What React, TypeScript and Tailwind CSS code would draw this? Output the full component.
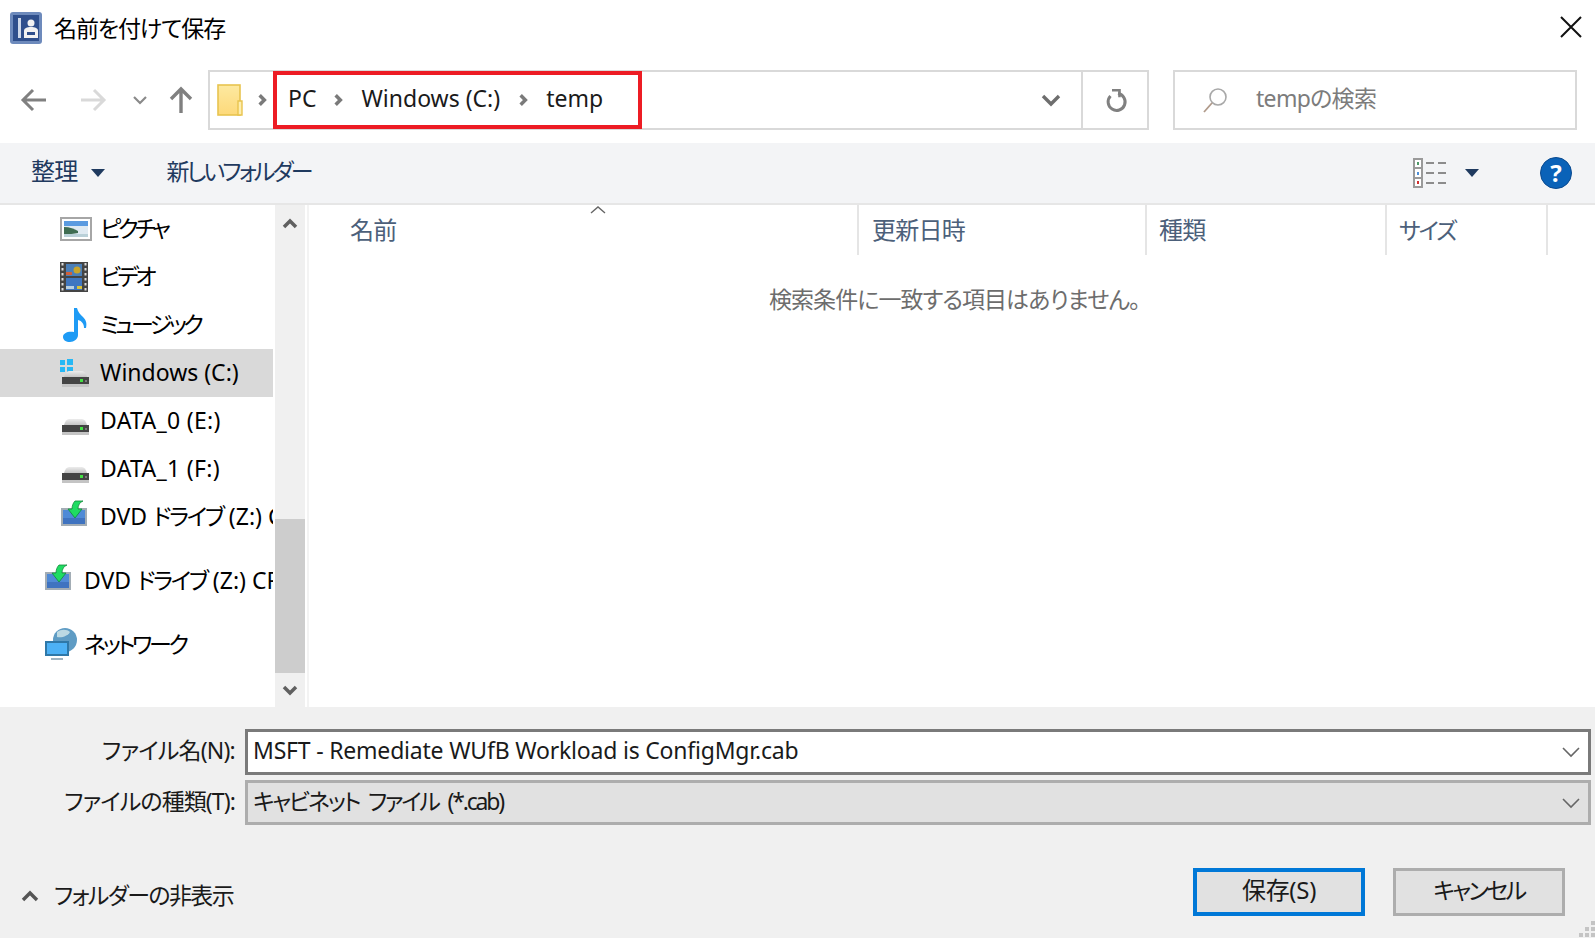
import React from "react";

const FONT = "font-['Noto_Sans','Noto_Sans_CJK_JP',sans-serif]";
const PALT = "[font-feature-settings:'palt']";
const KANA = `text-[23px] tracking-[-3.6px] ${PALT}`;
const LATIN = "text-[23px]";
const KANJI = `text-[24px] tracking-[-0.03em] ${PALT}`;

function Chevron({ className, color = "#7a7a7a", w = 3 }: { className?: string; color?: string; w?: number }) {
  return (
    <svg viewBox="0 0 10 12" className={className} fill="none">
      <path d="M3 2l4 4-4 4" stroke={color} strokeWidth={w} />
    </svg>
  );
}

function DownCaret({ className }: { className?: string }) {
  return (
    <svg viewBox="0 0 16 10" className={className}>
      <path d="M1 1h14L8 9z" fill="#1f3a5f" />
    </svg>
  );
}

function ThinDown() {
  return (
    <svg viewBox="0 0 18 12" className="w-[18px] h-[12px]" fill="none">
      <path d="M1 2l8 8 8-8" stroke="#666" strokeWidth="1.6" />
    </svg>
  );
}

function AppIcon() {
  return (
    <svg viewBox="0 0 32 32" className="w-[32px] h-[32px]">
      <rect x="0" y="0" width="32" height="32" rx="3" fill="#6d8abc" />
      <rect x="3" y="3" width="26" height="26" fill="#2f4f8c" />
      <rect x="8" y="6" width="3" height="20" fill="#cfd9ea" />
      <circle cx="21" cy="11" r="3.5" fill="#f2f2f2" />
      <path d="M14 26v-7c0-3 3-4 7-4s7 1 7 4v7z" fill="#f2f2f2" />
      <rect x="17" y="20" width="8" height="3" fill="#2f4f8c" />
    </svg>
  );
}

function FolderIcon() {
  return (
    <svg viewBox="0 0 26 32" className="w-[26px] h-[32px]">
      <defs>
        <linearGradient id="fo" x1="0" y1="0" x2="0" y2="1">
          <stop offset="0" stopColor="#fde9a0" />
          <stop offset="1" stopColor="#fdd97a" />
        </linearGradient>
      </defs>
      <rect x="1" y="1" width="22" height="30" fill="url(#fo)" stroke="#e8c44f" strokeWidth="1.6" />
      <path d="M21 17h4v14h-4z" fill="#fdeeb0" stroke="#e8c44f" strokeWidth="1.4" />
    </svg>
  );
}

function PictureIcon() {
  return (
    <svg viewBox="0 0 32 24" className="w-[32px] h-[24px]">
      <rect x="1" y="1" width="30" height="22" fill="#fff" stroke="#a6a6a6" strokeWidth="2" />
      <rect x="4" y="4" width="24" height="16" fill="#dfeaf2" />
      <rect x="4" y="4" width="24" height="5" fill="#5b9be0" />
      <path d="M4 10c6 0 10 2 14 4v2c-4 1-9 1-14 1z" fill="#3f6d52" />
      <path d="M4 17h24v3H4z" fill="#b9d0d8" />
    </svg>
  );
}

function VideoIcon() {
  return (
    <svg viewBox="0 0 28 30" className="w-[28px] h-[30px]">
      <rect x="0" y="0" width="28" height="30" fill="#444" />
      {[1, 6, 11, 16, 21, 26].map((y) => (
        <React.Fragment key={y}>
          <rect x="1.5" y={y} width="2" height="2.5" fill="#ddd" />
          <rect x="24.5" y={y} width="2" height="2.5" fill="#ddd" />
        </React.Fragment>
      ))}
      <rect x="6" y="2" width="16" height="12" fill="#4b7fb8" />
      <circle cx="17" cy="8" r="3.5" fill="#c9a52c" />
      <rect x="6" y="10" width="6" height="3" fill="#d0603a" />
      <rect x="6" y="16" width="16" height="12" fill="#3f76c0" />
      <rect x="6" y="24" width="8" height="3" fill="#b8cfe0" />
      <rect x="17" y="24" width="5" height="3" fill="#d9c23a" />
    </svg>
  );
}

function MusicIcon() {
  return (
    <svg viewBox="0 0 24 34" className="ml-[3px] w-[24px] h-[34px]">
      <path
        d="M11 0h3c1 4 3 6 6 9 3 3 4 6 3 11h-2c0-4-2-7-6-8v15c0 4-4 7-8 7-4 0-7-2-7-5 0-4 5-6 11-5z"
        fill="#1e9bf5"
      />
    </svg>
  );
}

function DriveIcon({ win }: { win?: boolean }) {
  return (
    <svg viewBox="0 0 30 30" className="w-[30px] h-[30px]">
      <defs>
        <linearGradient id="dome" x1="0" y1="0" x2="0" y2="1">
          <stop offset="0" stopColor="#ececec" />
          <stop offset="1" stopColor="#bdbdbd" />
        </linearGradient>
      </defs>
      {win && (
        <g fill="#26b8f5">
          <rect x="0" y="2" width="5" height="5" />
          <rect x="7" y="1" width="6" height="6" />
          <rect x="0" y="9" width="5" height="5" />
          <rect x="7" y="9" width="6" height="5" />
        </g>
      )}
      <path d="M4 19c1-4 3-6 5-6h13c2 0 4 2 5 6v1H4z" fill="url(#dome)" />
      <rect x="2" y="19" width="27" height="7" fill="#444" />
      <rect x="2" y="26" width="27" height="3" fill="#c4c4c4" />
      <rect x="20" y="21" width="3" height="3" fill="#43e043" />
      <rect x="25" y="22" width="2" height="2" fill="#7a7a7a" />
    </svg>
  );
}

function DvdIcon() {
  return (
    <svg viewBox="0 0 28 28" className="-mt-[6px] w-[28px] h-[28px]">
      <rect x="1" y="8" width="26" height="18" fill="#a3adb5" />
      <rect x="3" y="10" width="22" height="14" fill="#4f8ad6" />
      <rect x="3" y="18" width="22" height="6" fill="#3f73c0" />
      <path d="M15 1h8c-3 1-5 4-5 8h4l-7 9-7-9h4c0-3 1-6 3-8z" fill="#1fdc62" stroke="#0f8a3a" strokeWidth="0.8" />
    </svg>
  );
}

function NetworkIcon() {
  return (
    <svg viewBox="0 0 34 34" className="w-[34px] h-[34px]">
      <circle cx="21" cy="12" r="12" fill="#5f9cc4" />
      <path d="M13 4c4-3 10-3 13 0-2 4-8 6-13 5z" fill="#bcd9e3" />
      <rect x="1" y="13" width="24" height="15" fill="#2f78a8" />
      <rect x="3" y="15" width="20" height="11" fill="#4db1f5" />
      <rect x="7" y="30" width="12" height="2" fill="#9fb4c2" />
    </svg>
  );
}

function ViewIcon() {
  return (
    <svg viewBox="0 0 34 30" className="w-[34px] h-[30px]">
      <rect x="1" y="1" width="8" height="28" fill="#fff" stroke="#9a9a9a" strokeWidth="2" />
      <path d="M1 10h8M1 20h8" stroke="#9a9a9a" strokeWidth="2" />
      <rect x="4" y="4" width="2" height="3" fill="#4f9a6a" />
      <rect x="4" y="14" width="2" height="3" fill="#4f8fd6" />
      <rect x="4" y="23" width="2" height="3" fill="#d03030" />
      <path d="M13 5h8M25 5h8M13 15h8M25 15h8M13 25h8M25 25h8" stroke="#8c8c8c" strokeWidth="2" />
    </svg>
  );
}

function HelpIcon() {
  return (
    <div className={`w-[32px] h-[32px] rounded-full bg-[#0a62b8] border border-[#0a4a90] flex items-center justify-center text-white text-[24px] font-bold leading-none ${FONT}`}>
      ?
    </div>
  );
}

type Row = { label: React.ReactNode; cls: string; icon: React.ReactNode; outer?: boolean; selected?: boolean };

const kanaSpan = (s: string) => <span className="tracking-[-2.2px]">{s}</span>;
const DATA = "text-[23px] tracking-[0.3px]";

const rows: Row[] = [
  { label: "ピクチャ", cls: KANA, icon: <PictureIcon /> },
  { label: "ビデオ", cls: KANA, icon: <VideoIcon /> },
  { label: "ミュージック", cls: KANA, icon: <MusicIcon /> },
  { label: "Windows (C:)", cls: LATIN, icon: <DriveIcon win />, selected: true },
  { label: "DATA_0 (E:)", cls: DATA, icon: <DriveIcon /> },
  { label: "DATA_1 (F:)", cls: DATA, icon: <DriveIcon /> },
  { label: <>DVD {kanaSpan("ドライブ")} (Z:) CP</>, cls: `${LATIN} ${PALT}`, icon: <DvdIcon /> },
  { label: <>DVD {kanaSpan("ドライブ")} (Z:) CP</>, cls: `${LATIN} ${PALT}`, icon: <DvdIcon />, outer: true },
  { label: "ネットワーク", cls: `text-[23px] tracking-[-3.3px] ${PALT}`, icon: <NetworkIcon />, outer: true },
];

function NavRow({ row }: { row: Row }) {
  return (
    <div
      className={`h-[48px] flex items-center shrink-0 overflow-hidden whitespace-nowrap w-[273px] ${
        row.outer ? "pl-[44px] mt-[16px]" : "pl-[60px]"
      } ${row.selected ? "bg-[#d9d9d9]" : ""}`}
    >
      <div className="w-[34px] mr-[6px] flex justify-start shrink-0">{row.icon}</div>
      <span className={`pb-[2px] text-black ${row.cls}`}>{row.label}</span>
    </div>
  );
}

function Header({ label, className, textCls = KANJI }: { label: string; className: string; textCls?: string }) {
  return (
    <div className={`h-[50px] flex items-center border-r-2 border-[#e5e5e5] text-[#4c607a] ${className}`}>
      <span className={textCls}>{label}</span>
    </div>
  );
}

export default function App() {
  return (
    <div className={`w-[1595px] h-[938px] flex flex-col bg-white overflow-hidden ${FONT}`}>
      {/* title */}
      <div className="h-[70px] shrink-0 flex items-start">
        <div className="flex items-center pl-[10px] pt-[12px] gap-[12px]">
          <AppIcon />
          <span className={`text-[23px] tracking-[-1.1px] leading-[32px] text-black ${PALT}`}>名前を付けて保存</span>
        </div>
        <div className="ml-auto pt-[15px] pr-[12px]">
          <svg viewBox="0 0 24 24" className="w-[24px] h-[24px]" fill="none">
            <path d="M2 2l20 20M22 2L2 22" stroke="#111" strokeWidth="2" />
          </svg>
        </div>
      </div>

      {/* address row */}
      <div className="h-[73px] shrink-0 flex items-start">
        <div className="w-[208px] h-[60px] flex items-center shrink-0">
          <svg viewBox="0 0 28 24" className="ml-[20px] w-[28px] h-[24px]" fill="none">
            <path d="M26 12H3M13 2L3 12l10 10" stroke="#808080" strokeWidth="3" />
          </svg>
          <svg viewBox="0 0 28 24" className="ml-[31px] w-[28px] h-[24px]" fill="none">
            <path d="M2 12h23M15 2l10 10-10 10" stroke="#d9d9d9" strokeWidth="3" />
          </svg>
          <svg viewBox="0 0 14 10" className="ml-[26px] w-[14px] h-[10px]" fill="none">
            <path d="M1 2l6 6 6-6" stroke="#8a8a8a" strokeWidth="2.2" />
          </svg>
          <svg viewBox="0 0 24 28" className="ml-[22px] w-[24px] h-[28px]" fill="none">
            <path d="M12 27V3M2 13L12 3l10 10" stroke="#808080" strokeWidth="3.4" />
          </svg>
        </div>
        <div className="w-[941px] h-[60px] border-2 border-[#d9d9d9] flex items-center shrink-0">
          <div className="ml-[7px] shrink-0"><FolderIcon /></div>
          <Chevron className="ml-[13px] w-[12px] h-[14px]" />
          <div className="ml-[5px] w-[369px] h-[58px] border-[4px] border-[#ed1c24] flex items-center pl-[11px] pb-[4px] text-[23px] text-[#1a1a1a] whitespace-nowrap shrink-0">
            <span>PC</span>
            <Chevron className="ml-[16px] mr-[17px] mt-[4px] w-[12px] h-[14px]" />
            <span>Windows (C:)</span>
            <Chevron className="ml-[17px] mr-[17px] mt-[4px] w-[12px] h-[14px]" />
            <span>temp</span>
          </div>
          <svg viewBox="0 0 20 13" className="ml-auto mr-[20px] w-[20px] h-[13px]" fill="none">
            <path d="M2 2l8 8 8-8" stroke="#6e6e6e" strokeWidth="3.4" />
          </svg>
          <div className="w-[66px] h-full border-l-2 border-[#d9d9d9] flex items-center justify-center">
            <svg viewBox="0 0 24 26" className="ml-[3px] w-[24px] h-[26px]" fill="none">
              <path d="M13 6.5A8.5 8.5 0 1 1 5.5 9" stroke="#808080" strokeWidth="3" />
              <path d="M7 3.2h7.5v7" stroke="#808080" strokeWidth="2.6" />
            </svg>
          </div>
        </div>
        <div className="ml-[24px] w-[404px] h-[60px] border-2 border-[#d9d9d9] flex items-center shrink-0">
          <svg viewBox="0 0 26 26" className="ml-[27px] w-[26px] h-[26px]" fill="none">
            <circle cx="16" cy="10" r="8" stroke="#a8a8a8" strokeWidth="1.6" />
            <path d="M10 16L2 25" stroke="#b09a8a" strokeWidth="1.8" />
          </svg>
          <span className={`ml-[28px] pb-[4px] text-[23px] tracking-[-0.7px] text-[#7c7c7c] ${PALT}`}>tempの検索</span>
        </div>
      </div>

      {/* toolbar */}
      <div className="h-[62px] shrink-0 bg-[#f3f4f6] border-b-2 border-[#e6e6e6] flex items-center">
        <span className={`ml-[31px] pb-[4px] text-[#1f3a5f] ${KANJI}`}>整理</span>
        <DownCaret className="ml-[12px] w-[16px] h-[10px]" />
        <span className={`ml-[61px] pb-[4px] text-[23px] tracking-[-2.8px] text-[#1f3a5f] ${PALT}`}>新しいフォルダー</span>
        <div className="ml-auto flex items-center">
          <ViewIcon />
          <DownCaret className="ml-[17px] w-[16px] h-[10px]" />
          <div className="ml-[60px] mr-[23px]"><HelpIcon /></div>
        </div>
      </div>

      {/* main */}
      <div className="flex-1 flex min-h-0">
        <div className="w-[275px] shrink-0 flex flex-col overflow-hidden">
          {rows.map((r, i) => (
            <NavRow key={i} row={r} />
          ))}
        </div>
        <div className="w-[30px] shrink-0 bg-[#f0f0f0] flex flex-col items-center">
          <svg viewBox="0 0 16 12" className="mt-[12px] w-[16px] h-[12px]" fill="none">
            <path d="M2 10l6-6 6 6" stroke="#606060" strokeWidth="3.5" />
          </svg>
          <div className="mt-[290px] w-full h-[154px] bg-[#cdcdcd]" />
          <svg viewBox="0 0 16 12" className="mt-[12px] w-[16px] h-[12px]" fill="none">
            <path d="M2 2l6 6 6-6" stroke="#606060" strokeWidth="3.5" />
          </svg>
        </div>
        <div className="w-[4px] shrink-0 border-r-2 border-[#f3f3f3]" />
        <div className="flex-1 min-w-0 flex flex-col">
          <div className="flex items-start shrink-0 relative">
            <svg viewBox="0 0 16 8" className="absolute left-[281px] top-[1px] w-[16px] h-[8px]" fill="none">
              <path d="M1 7l7-6 7 6" stroke="#666" strokeWidth="1.4" />
            </svg>
            <Header label="名前" className="w-[550px] pl-[41px]" />
            <Header label="更新日時" className="w-[288px] pl-[13px]" />
            <Header label="種類" className="w-[240px] pl-[12px]" />
            <Header label="サイズ" className="w-[161px] pl-[12px]" textCls={`text-[23px] tracking-[-2px] ${PALT}`} />
          </div>
          <div className={`mt-[28px] pl-[460px] text-[23px] tracking-[-0.95px] leading-[32px] text-[#6d6d6d] whitespace-nowrap ${PALT}`}>
            検索条件に一致する項目はありません。
          </div>
        </div>
      </div>

      {/* bottom */}
      <div className="h-[231px] shrink-0 bg-[#f0f0f0] flex flex-col relative">
        <div className="mt-[22px] flex items-center h-[46px] pr-[4px]">
          <span className={`w-[235px] pb-[4px] text-right text-[23px] tracking-[-0.8px] text-[#1a1a1a] whitespace-nowrap ${PALT}`}>ファイル名(N):</span>
          <div className="ml-[10px] flex-1 h-full bg-white border-[3px] border-[#7a7a7a] flex items-center pl-[5px] pr-[8px]">
            <span className="pb-[4px] text-[23px] tracking-[-0.2px] text-[#1a1a1a] whitespace-nowrap">MSFT - Remediate WUfB Workload is ConfigMgr.cab</span>
            <span className="ml-auto"><ThinDown /></span>
          </div>
        </div>
        <div className="mt-[5px] flex items-center h-[45px] pr-[4px]">
          <span className={`w-[235px] pb-[2px] text-right text-[23px] tracking-[-0.9px] text-[#1a1a1a] whitespace-nowrap ${PALT}`}>ファイルの種類(T):</span>
          <div className="ml-[10px] flex-1 h-full bg-[#e1e1e1] border-[3px] border-[#adadad] flex items-center pl-[5px] pr-[8px]">
            <span className={`pb-[2px] text-[23px] tracking-[-2.2px] [word-spacing:5px] text-[#1a1a1a] whitespace-nowrap ${PALT}`}>キャビネット ファイル (*.cab)</span>
            <span className="ml-auto"><ThinDown /></span>
          </div>
        </div>
        <div className="mt-[43px] flex items-center h-[48px]">
          <svg viewBox="0 0 18 12" className="ml-[21px] mt-[8px] w-[18px] h-[12px]" fill="none">
            <path d="M2 10l7-7 7 7" stroke="#555" strokeWidth="3.4" />
          </svg>
          <span className={`ml-[15px] pt-[6px] text-[23px] tracking-[-1.6px] text-[#1a1a1a] ${PALT}`}>フォルダーの非表示</span>
          <div className="ml-auto w-[172px] h-[48px] bg-[#e1e1e1] border-[4px] border-[#0078d7] flex items-center justify-center">
            <span className={`pb-[4px] text-[24px] tracking-[-0.3px] text-[#1a1a1a] ${PALT}`}>保存(S)</span>
          </div>
          <div className="ml-[28px] mr-[30px] w-[172px] h-[48px] bg-[#e1e1e1] border-[3px] border-[#adadad] flex items-center justify-center">
            <span className={`pb-[4px] text-[23px] tracking-[-2.6px] text-[#1a1a1a] ${PALT}`}>キャンセル</span>
          </div>
        </div>
        <svg viewBox="0 0 16 16" className="absolute right-0 bottom-[1px] w-[16px] h-[16px]">
          <g fill="#c4c4c4">
            <rect x="12" y="0" width="4" height="4" />
            <rect x="6" y="6" width="4" height="4" />
            <rect x="12" y="6" width="4" height="4" />
            <rect x="0" y="12" width="4" height="4" />
            <rect x="6" y="12" width="4" height="4" />
            <rect x="12" y="12" width="4" height="4" />
          </g>
        </svg>
      </div>
    </div>
  );
}
